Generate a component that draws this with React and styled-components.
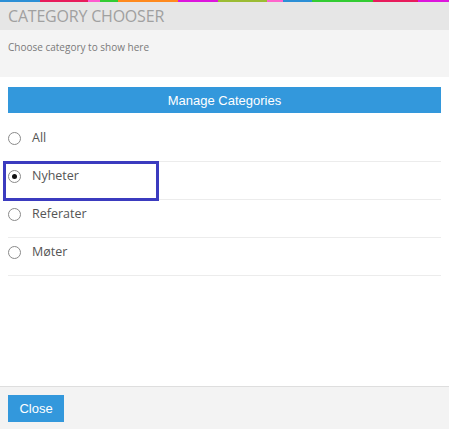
import React from "react";
import styled, { createGlobalStyle } from "styled-components";

const Global = createGlobalStyle`
  html, body { margin: 0; padding: 0; background: #ffffff; }
  body { font-family: "Open Sans", "DejaVu Sans", sans-serif; }
`;

const Page = styled.div`
  width: 449px;
  height: 429px;
  display: flex;
  flex-direction: column;
  background: #ffffff;
  position: relative;
  overflow: hidden;
`;

const Stripe = styled.div`
  display: flex;
  height: 2px;
  flex: none;
`;

const Segment = styled.div`
  height: 100%;
  background: ${(p) => p.$color};
`;

const Header = styled.div`
  flex: none;
  height: 28px;
  background: #e6e6e6;
  display: flex;
  align-items: center;
  padding: 0 8px;
`;

const Title = styled.h1`
  margin: 0;
  font-family: "Open Sans", sans-serif;
  font-weight: 400;
  font-size: 16px;
  letter-spacing: -0.2px;
  color: #a0a0a0;
`;

const Description = styled.div`
  flex: none;
  height: 47px;
  background: #f4f4f4;
  padding: 10px 8px 0;
  box-sizing: border-box;
  font-size: 10px;
  color: #7a7a7a;
`;

const Content = styled.div`
  flex: 1;
  padding: 10px 8px 0;
  display: flex;
  flex-direction: column;
`;

const ManageButton = styled.button`
  height: 26px;
  border: none;
  background: #3398dc;
  color: #ffffff;
  font-family: "Liberation Sans", Arial, sans-serif;
  font-size: 13px;
  padding: 0;
  margin: 0 0 11px;
  cursor: pointer;
`;

const List = styled.ul`
  list-style: none;
  margin: 0;
  padding: 0;
`;

const Row = styled.li`
  height: 38px;
  box-sizing: border-box;
  border-bottom: 1px solid #ececec;
  display: flex;
  align-items: flex-start;
  gap: 11px;
  padding-top: 5px;
  font-family: "Open Sans", sans-serif;
  font-size: 12.5px;
  line-height: 18px;
  color: #555555;
`;

const Radio = styled.span`
  width: 11px;
  height: 11px;
  margin-top: 3px;
  border-radius: 50%;
  border: 1px solid #8a8a8a;
  background: #ffffff;
  display: flex;
  align-items: center;
  justify-content: center;
  flex: none;
  &::after {
    content: "";
    width: 5px;
    height: 5px;
    border-radius: 50%;
    background: ${(p) => (p.$checked ? "#111" : "transparent")};
  }
`;

const Highlight = styled.div`
  position: absolute;
  left: 3px;
  top: 161px;
  width: 150px;
  height: 34px;
  border: 3px solid #3b3bbf;
`;

const Footer = styled.div`
  flex: none;
  height: 43px;
  border-top: 1px solid #dedede;
  background: #f3f3f3;
  padding: 8px;
  box-sizing: border-box;
  display: flex;
  align-items: flex-start;
`;

const CloseButton = styled.button`
  width: 56px;
  height: 27px;
  border: none;
  background: #3398dc;
  color: #ffffff;
  font-family: "Liberation Sans", Arial, sans-serif;
  font-size: 13px;
  padding: 0;
  cursor: pointer;
`;

const stripe = [
  ["#2c8fd6", 40],
  ["#e81c5c", 48],
  ["#ff5ad0", 12],
  ["#33cc33", 18],
  ["#ff8a1e", 60],
  ["#dd16dd", 40],
  ["#9cbc34", 49],
  ["#ff66cc", 16],
  ["#2c8fd6", 29],
  ["#33cc33", 61],
  ["#e81c5c", 45],
  ["#dd16dd", 31],
];

const categories = [
  { name: "All", checked: false },
  { name: "Nyheter", checked: true },
  { name: "Referater", checked: false },
  { name: "Møter", checked: false },
];

export default function App() {
  return (
    <>
      <Global />
      <Page>
        <Stripe>
          {stripe.map(([c, w], i) => (
            <Segment key={i} $color={c} style={{ width: w }} />
          ))}
        </Stripe>
        <Header>
          <Title>CATEGORY CHOOSER</Title>
        </Header>
        <Description>Choose category to show here</Description>
        <Content>
          <ManageButton>Manage Categories</ManageButton>
          <List>
            {categories.map((c) => (
              <Row key={c.name}>
                <Radio $checked={c.checked} />
                {c.name}
              </Row>
            ))}
          </List>
        </Content>
        <Footer>
          <CloseButton>Close</CloseButton>
        </Footer>
        <Highlight />
      </Page>
    </>
  );
}
